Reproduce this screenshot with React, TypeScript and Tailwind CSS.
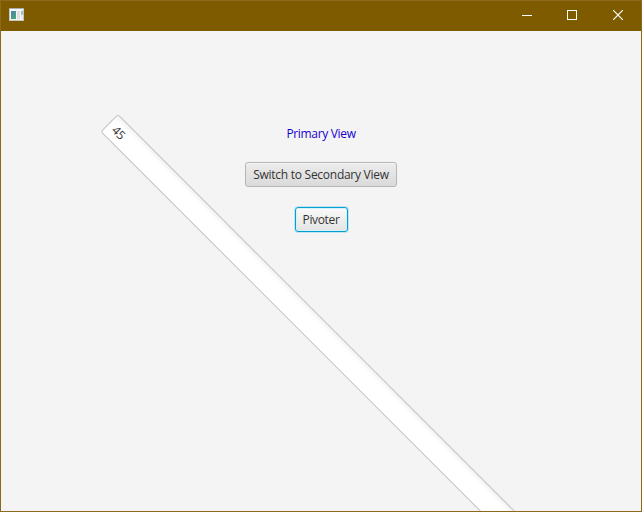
import React from "react";

function AppIcon() {
  return (
    <svg width="15" height="13" viewBox="0 0 15 13" shapeRendering="crispEdges">
      <defs>
        <linearGradient id="pane" x1="0" y1="0" x2="1" y2="1">
          <stop offset="0" stopColor="#4b7fb0" />
          <stop offset="1" stopColor="#49ab73" />
        </linearGradient>
        <linearGradient id="side" x1="0" y1="0" x2="0" y2="1">
          <stop offset="0" stopColor="#8fb4d8" />
          <stop offset="1" stopColor="#9fd3ae" />
        </linearGradient>
      </defs>
      <rect x="0" y="0" width="15" height="13" fill="#c9c6c0" />
      <rect x="0" y="0" width="15" height="1" fill="#a9adb3" />
      <rect x="1" y="1" width="13" height="11" fill="#f5f5f5" />
      <rect x="2" y="3" width="5" height="8" fill="url(#pane)" />
      <rect x="8" y="3" width="3" height="8" fill="#dfdfdf" />
      <rect x="12" y="3" width="2" height="4" fill="url(#side)" />
      <rect x="12" y="7" width="2" height="4" fill="#e9e9e9" />
    </svg>
  );
}

function WindowControls() {
  return (
    <div className="flex h-full">
      <div className="flex w-[45px] justify-center pt-[14px]">
        <div className="h-px w-[10px] bg-white" />
      </div>
      <div className="flex w-[46px] justify-center pt-[9px]">
        <div className="size-[10px] border border-white" />
      </div>
      <div className="flex w-[46px] justify-center pt-[9px]">
        <svg width="10" height="10" viewBox="0 0 10 10" stroke="#fff" strokeWidth="1.2">
          <path d="M0 0L10 10M10 0L0 10" />
        </svg>
      </div>
    </div>
  );
}

export default function App() {
  return (
    <div className="relative flex h-[512px] w-[642px] flex-col overflow-hidden border border-[#8b6a1b] bg-[#f4f4f4] font-['Open_Sans','Noto_Sans',sans-serif] text-[12px] leading-4 tracking-[-0.27px] text-[#333]">
      <header className="flex h-[30px] shrink-0 items-start justify-between bg-[#7f5b00]">
        <div className="pt-[7px] pl-[8px]">
          <AppIcon />
        </div>
        <WindowControls />
      </header>
      <main className="flex flex-col items-center">
        <div className="mt-[95px] tracking-[-0.33px] text-[#1400d2]">Primary View</div>
        <button className="mt-[20px] flex h-[25px] w-[152px] items-center justify-center rounded-[3px] border border-[#b5b5b5] bg-linear-to-b from-[#ececec] to-[#dadada] whitespace-nowrap shadow-[inset_0_1px_0_#f8f8f8]">
          Switch to Secondary View
        </button>
        <button className="mt-[20px] flex h-[25px] w-[53px] items-center justify-center rounded-[3px] border border-[#039ed3] bg-linear-to-b from-[#fafafa] to-[#e4e4e4] tracking-[-0.35px] shadow-[0_0_0_1px_#c4e5f0,inset_0_0_0_1px_#d5f0fa]">
          Pivoter
        </button>
      </main>
      <div className="absolute top-[113px] left-[117px] flex h-[25px] w-[640px] origin-top-left rotate-45 items-center rounded-[3px] border border-[#c4c4c4] bg-linear-to-b from-[#f2f2f2] to-white to-[5px] pl-[6px]">
        45
      </div>
    </div>
  );
}
